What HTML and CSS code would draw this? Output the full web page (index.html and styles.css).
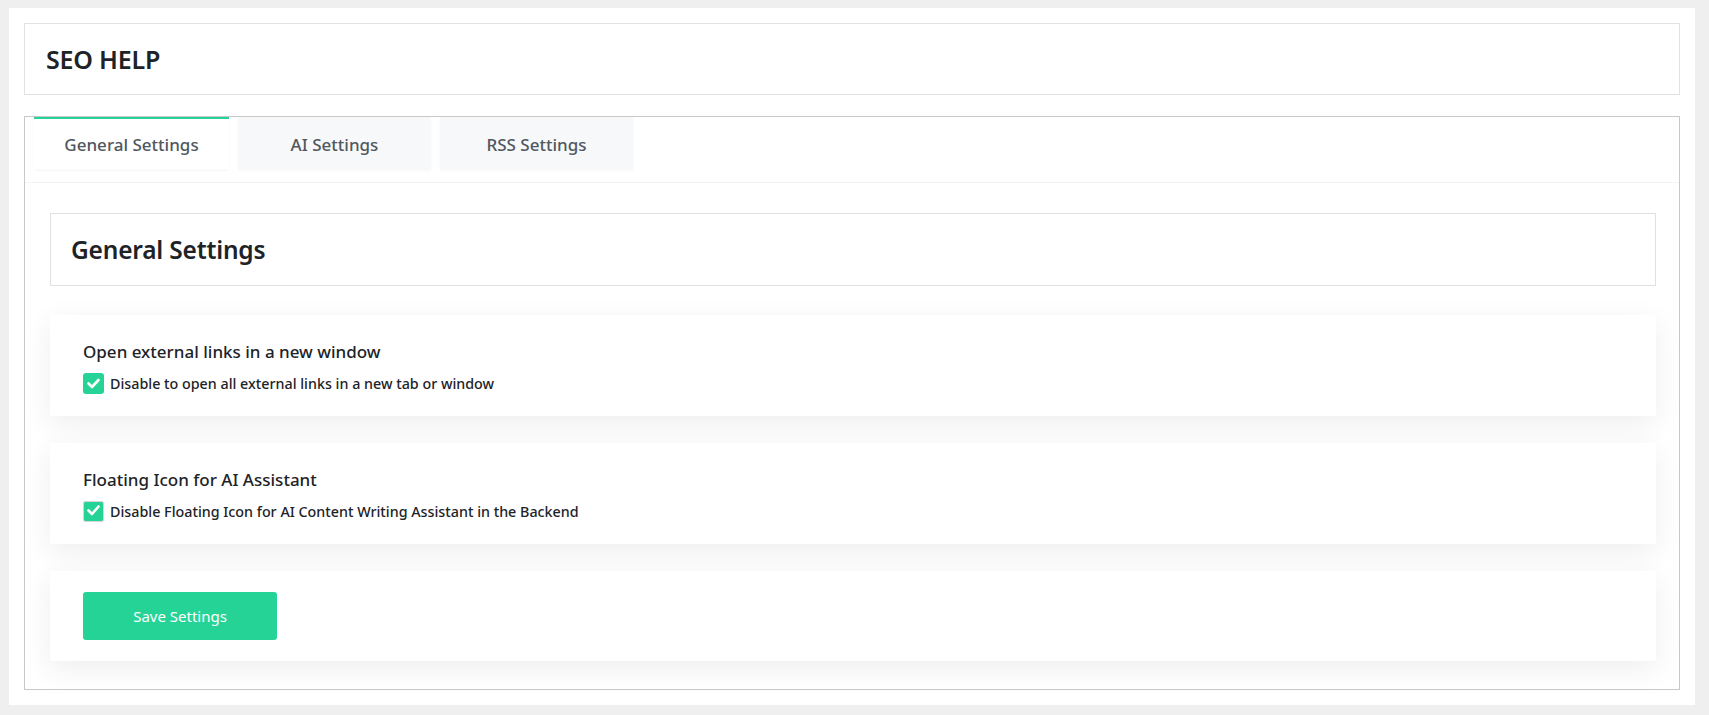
FILE: index.html
```html
<!DOCTYPE html>
<html lang="en">
<head>
    <meta charset="UTF-8">
    <meta name="viewport" content="width=device-width, initial-scale=1.0">
    <title>SEO Help</title>
    <link rel="stylesheet" href="styles.css">
</head>
<body>
    <div class="wrap">
        <div class="page-header">
            <h1>SEO HELP</h1>
        </div>

        <div class="settings-panel">
            <div class="tab-nav">
                <button class="tab active">General Settings</button>
                <button class="tab">AI Settings</button>
                <button class="tab">RSS Settings</button>
            </div>

            <div class="tab-content">
                <div class="section-title">
                    <h2>General Settings</h2>
                </div>

                <div class="card">
                    <h3>Open external links in a new window</h3>
                    <label class="check-row">
                        <span class="check-box">
                            <svg viewBox="0 0 21 21" width="21" height="21"><polyline points="5.5,10.5 9,14 15.5,7" fill="none" stroke="#fff" stroke-width="2.6" stroke-linecap="round" stroke-linejoin="round"/></svg>
                        </span>
                        Disable to open all external links in a new tab or window
                    </label>
                </div>

                <div class="card">
                    <h3>Floating Icon for AI Assistant</h3>
                    <label class="check-row">
                        <span class="check-box outlined">
                            <svg viewBox="0 0 19 19" width="19" height="19"><polyline points="4.5,8.5 8,12 14.5,4.5" fill="none" stroke="#fff" stroke-width="2.6" stroke-linecap="round" stroke-linejoin="round"/></svg>
                        </span>
                        Disable Floating Icon for AI Content Writing Assistant in the Backend
                    </label>
                </div>

                <div class="card card-actions">
                    <button class="save-btn">Save Settings</button>
                </div>
            </div>
        </div>
    </div>
</body>
</html>
```

FILE: styles.css
```css
body {
    font-family: "Noto Sans", "Open Sans", sans-serif;
    background-color: #efefef;
    color: #1d2327;
    margin: 0;
    padding: 8px 14px 11px 9px;
}

.wrap {
    background-color: #fff;
    padding: 15px;
}

.page-header {
    border: 1px solid #e2e2e2;
    height: 70px;
    display: flex;
    align-items: center;
    padding: 0 21px;
}

.page-header h1 {
    margin: 0;
    font-size: 25px;
    font-weight: 600;
    letter-spacing: -0.2px;
}

.settings-panel {
    margin-top: 21px;
    border: 1px solid #c8c8c8;
}

.tab-nav {
    display: flex;
    gap: 9px;
    padding: 0 9px;
    height: 65px;
    border-bottom: 1px solid #f3f3f3;
}

.tab {
    width: 193px;
    height: 52px;
    border: none;
    border-top: 2px solid transparent;
    background-color: #f7f8f9;
    color: #50575e;
    font-family: inherit;
    font-size: 17px;
    font-weight: 500;
    cursor: pointer;
    box-shadow: 0 2px 3px rgba(0, 0, 0, 0.03);
}

.tab.active {
    width: 195px;
    background-color: #fff;
    border-top-color: #26d396;
}

.tab-content {
    padding: 30px 23px 28px 25px;
}

.section-title {
    border: 1px solid #e0e0e0;
    height: 71px;
    display: flex;
    align-items: center;
    padding: 0 20px;
    margin-bottom: 29px;
}

.section-title h2 {
    margin: 0;
    font-size: 24.5px;
    font-weight: 600;
    letter-spacing: -0.2px;
}

.card {
    background-color: #fff;
    padding: 25px 33px 22px;
    margin-bottom: 27px;
    box-shadow: 0 8px 28px rgba(0, 0, 0, 0.07);
}

.card:last-child {
    margin-bottom: 0;
}

.card h3 {
    margin: 0 0 9px;
    font-size: 17px;
    font-weight: 500;
    line-height: 24px;
}

.check-row {
    display: flex;
    align-items: center;
    gap: 6px;
    font-size: 14.3px;
    font-weight: 500;
    cursor: pointer;
}

.check-box {
    width: 21px;
    height: 21px;
    border-radius: 3px;
    background-color: #26d396;
    display: flex;
    align-items: center;
    justify-content: center;
    flex-shrink: 0;
}

.check-box.outlined {
    width: 19px;
    height: 19px;
    border: 1px solid #d6d6d6;
    border-radius: 2px;
    background-clip: content-box;
    align-items: flex-start;
}

.card-actions {
    padding: 21px 33px;
}

.save-btn {
    width: 194px;
    height: 48px;
    border: none;
    border-radius: 3px;
    background-color: #26d396;
    color: #fff;
    font-family: inherit;
    font-size: 15px;
    cursor: pointer;
}
```
